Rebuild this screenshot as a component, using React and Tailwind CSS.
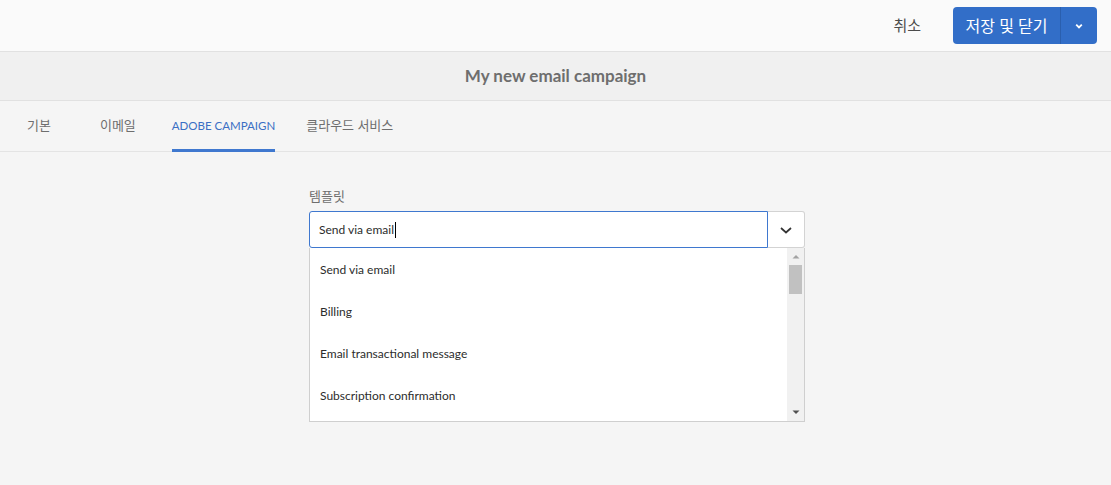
import React from "react";

const font = { fontFamily: 'Lato, "Noto Sans CJK KR", sans-serif' };

export default function App() {
  const items = ["Send via email", "Billing", "Email transactional message", "Subscription confirmation"];
  return (
    <div className="w-[1111px] h-[485px] bg-[#f5f5f5] flex flex-col overflow-hidden" style={font}>
      <div className="h-[52px] bg-[#fafafa] border-b border-[#e1e1e1] flex items-center justify-end pr-[14px] shrink-0">
        <button className="text-[15px] text-[#4b4b4b] mr-[32px]">취소</button>
        <div className="flex h-[37px] rounded-[4px] bg-[#326ec8] text-white overflow-hidden">
          <button className="w-[108px] text-[16px] leading-none border-r border-[#2a5fae]">저장 및 닫기</button>
          <button className="w-[36px] flex items-center justify-center">
            <svg width="10" height="10" viewBox="0 0 10 10"><path d="M2.2 3.6 L5 6.4 L7.8 3.6" stroke="white" strokeWidth="1.8" fill="none" /></svg>
          </button>
        </div>
      </div>
      <div className="h-[49px] bg-[#f0f0f0] border-b border-[#e1e1e1] flex items-center justify-center shrink-0">
        <span className="text-[17px] font-bold text-[#6e6e6e]">My new email campaign</span>
      </div>
      <div className="h-[51px] border-b border-[#e4e4e4] flex items-stretch pl-[27px] shrink-0 text-[13px]">
        <div className="flex items-center mr-[49px] text-[#6e6e6e]">기본</div>
        <div className="flex items-center mr-[36px] text-[#6e6e6e]">이메일</div>
        <div className="relative flex items-center mr-[31px] text-[11.5px] text-[#3a6fc4]">
          ADOBE CAMPAIGN
          <div className="absolute left-0 right-0 bottom-[-1px] h-[3px] bg-[#3f78cf]" />
        </div>
        <div className="flex items-center text-[#6e6e6e]">클라우드 서비스</div>
      </div>
      <div className="flex-1 flex justify-center">
        <div className="w-[496px] ml-[3px] pt-[34px]">
          <div className="text-[13px] text-[#6e6e6e] mb-[5px] leading-[20px]">템플릿</div>
          <div className="relative flex h-[37px]">
            <div className="flex-1 bg-white border border-[#3f78cf] rounded-l-[3px] flex items-center pl-[9px] text-[12px] text-[#2c2c2c]">
              Send via email<span className="w-px h-[16px] bg-black ml-[1px]" />
            </div>
            <div className="w-[37px] bg-white border border-l-0 border-[#d3d3d3] rounded-r-[3px] flex items-center justify-center">
              <svg width="14" height="10" viewBox="0 0 14 10"><path d="M2 3 L7 7.5 L12 3" stroke="#333" strokeWidth="1.7" fill="none" /></svg>
            </div>
            <div className="absolute left-0 right-0 top-[37px] h-[174px] bg-white border border-[#cfcfcf] border-t-0 flex">
              <div className="flex-1 flex flex-col pt-[1px]">
                {items.map((t) => (
                  <div key={t} className="h-[42px] flex items-center pl-[10px] text-[12px] text-[#2c2c2c]">{t}</div>
                ))}
              </div>
              <div className="w-[17px] bg-[#f1f1f1] flex flex-col items-center">
                <div className="h-[17px] flex items-center justify-center">
                  <svg width="8" height="5" viewBox="0 0 8 5"><path d="M0.5 4.5 L4 1 L7.5 4.5 Z" fill="#a3a3a3" /></svg>
                </div>
                <div className="w-[13px] h-[29px] bg-[#c1c1c1]" />
                <div className="flex-1" />
                <div className="h-[17px] flex items-center justify-center">
                  <svg width="8" height="5" viewBox="0 0 8 5"><path d="M0.5 0.5 L4 4 L7.5 0.5 Z" fill="#505050" /></svg>
                </div>
              </div>
            </div>
          </div>
        </div>
      </div>
    </div>
  );
}
